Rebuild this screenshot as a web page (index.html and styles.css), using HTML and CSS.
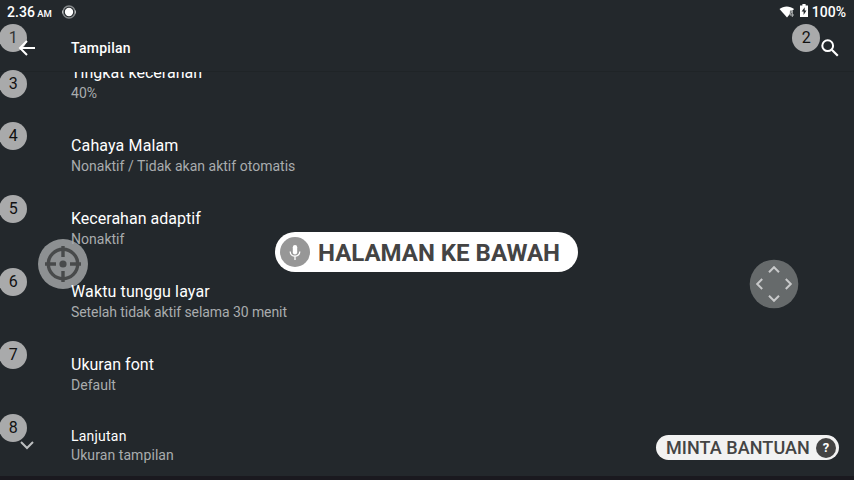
FILE: index.html
```html
<!DOCTYPE html>
<html lang="id">
<head>
<meta charset="utf-8">
<title>Tampilan</title>
<link rel="stylesheet" href="styles.css">
</head>
<body>
<div class="screen">
  <header class="status">
    <span class="time">2.36<small>AM</small></span>
    <svg class="recorder" width="16" height="16" viewBox="0 0 16 16"><circle cx="8" cy="8" r="6" fill="none" stroke="#85898b" stroke-width="1.5"/><path d="M1.5 6.5v3M14.5 6.5v3" stroke="#b5b8b9"/><circle cx="8" cy="8" r="4.2" fill="#fff"/></svg>
    <span class="spacer"></span>
    <svg class="wifi" width="16" height="14" viewBox="0 0 16 14"><path d="M.5 4C4.5.5 11 .5 15 4L8 12.5z" fill="#fff"/><path d="M11 5.5h4v6.5h-4.5z" fill="#23282c" opacity=".6"/><path d="M13.3 12V6L10.8 10H15" fill="none" stroke="#aeb1b2"/></svg>
    <svg class="battery" width="8" height="14" viewBox="0 0 8 14"><path d="M2.4 0h3.2v1.4H8V13H0V1.4h2.4z" fill="#fff"/><path d="M4.7 3.2L1.6 7.6h2v3.5L6.5 6.5h-1.8z" fill="#23282c"/></svg>
    <span class="percent">100%</span>
  </header>
  <nav class="toolbar">
    <svg class="back" width="18" height="16" viewBox="0 0 18 16"><path d="M17 8H3M9 1L2 8l7 7" fill="none" stroke="#fff" stroke-width="2"/></svg>
    <h1>Tampilan</h1>
    <svg class="search" width="18" height="18" viewBox="0 0 18 18"><circle cx="6.7" cy="6.7" r="5.4" fill="none" stroke="#fff" stroke-width="2"/><path d="M10.8 10.8l6 6" stroke="#fff" stroke-width="2.2"/></svg>
  </nav>
  <main class="list">
    <section class="row"><h2>Tingkat kecerahan</h2><p>40%</p></section>
    <section class="row"><h2 class="wide">Cahaya Malam</h2><p>Nonaktif / Tidak akan aktif otomatis</p></section>
    <section class="row"><h2>Kecerahan adaptif</h2><p>Nonaktif</p></section>
    <section class="row"><h2 class="wide">Waktu tunggu layar</h2><p class="tight">Setelah tidak aktif selama 30 menit</p></section>
    <section class="row"><h2>Ukuran font</h2><p>Default</p></section>
    <section class="row more"><svg class="chevron" width="14" height="9" viewBox="0 0 14 9"><path d="M1 1l6 6 6-6" fill="none" stroke="#bdbfc0" stroke-width="2"/></svg><h2>Lanjutan</h2><p>Ukuran tampilan</p></section>
  </main>
  <div class="bottom-edge"></div>

  <span class="tag t1">1</span>
  <span class="tag t2">2</span>
  <span class="tag t3">3</span>
  <span class="tag t4">4</span>
  <span class="tag t5">5</span>
  <span class="tag t6">6</span>
  <span class="tag t7">7</span>
  <span class="tag t8">8</span>

  <svg class="target" width="50" height="50" viewBox="0 0 50 50"><circle cx="25" cy="25" r="25" fill="#8d9092"/><g fill="none" stroke="#484a4b" stroke-width="3.4"><circle cx="25" cy="25" r="14.7"/><path d="M25 7v11M25 32v11M7 25h11M32 25h11"/></g><circle cx="25" cy="25" r="3.6" fill="#484a4b"/></svg>
  <svg class="dpad" width="50" height="50" viewBox="0 0 50 50"><circle cx="25" cy="25" r="24.3" fill="#666a6b"/><path d="M20 13.2l5-5 5 5M20 36.8l5 5 5-5M13.2 20l-5 5 5 5M36.8 20l5 5-5 5" fill="none" stroke="#c8c9ca" stroke-width="2"/></svg>

  <div class="voice">
    <svg width="30" height="30" viewBox="0 0 30 30"><circle cx="15" cy="15" r="15" fill="#979797"/><rect x="12.8" y="8" width="4.4" height="9.4" rx="2.2" fill="#fff"/><path d="M10.2 14.5c0 6.2 9.6 6.2 9.6 0M15 19.3V23" fill="none" stroke="#fff" stroke-width="1.3"/></svg>
    <span>HALAMAN KE BAWAH</span>
  </div>
  <div class="help"><span>MINTA BANTUAN</span><b>?</b></div>
</div>
</body>
</html>
```
FILE: styles.css
```css
* { box-sizing: border-box; }
body { margin: 0; background: #23282c; color: #fff; font-family: Roboto, "Liberation Sans", sans-serif; }
h1, h2, p { margin: 0; font-weight: 400; white-space: nowrap; }
svg { display: block; flex: none; }
.screen { position: relative; display: flex; flex-direction: column; width: 854px; height: 480px; overflow: hidden; }
.status { display: flex; align-items: center; height: 24px; padding: 0 8px 0 7px; font-size: 14px; font-weight: 500; }
.time { letter-spacing: .1px; }
.time small { margin-left: 2px; font-size: 9.5px; letter-spacing: 0; }
.recorder { margin-left: 9px; }
.spacer { flex: 1; }
.wifi { margin-right: 5px; }
.battery { margin: -2px 4px 0 0; }
.toolbar { position: relative; display: flex; align-items: center; height: 48px; padding: 0 15px 0 18px; border-bottom: 1px solid #1f2427; }
.toolbar h1 { flex: 1; margin-left: 35px; font-size: 14px; font-weight: 500; letter-spacing: .28px; }
.list { position: relative; flex: 1; min-height: 0; overflow: hidden; }
.row { height: 73px; padding: 16px 0 0 71px; }
.row:first-child { margin-top: -26px; }
.row h2 { font-size: 16px; line-height: 21px; letter-spacing: .02px; }
.row h2.wide { letter-spacing: .13px; }
.row p { color: #a9acae; font-size: 14px; line-height: 20px; letter-spacing: .02px; }
.row p.tight { letter-spacing: -.08px; }
.more { position: relative; }
.row.more h2 { font-size: 14px; line-height: 19px; letter-spacing: .22px; }
.row.more p { line-height: 19px; letter-spacing: .08px; }
.chevron { position: absolute; left: 20px; top: 30px; z-index: 2; }
.bottom-edge { height: 4px; background: #1a191f; }
.tag { position: absolute; left: -1px; width: 28px; height: 28px; border-radius: 50%; background: #a9aaab; color: #111; font-size: 16px; line-height: 28px; text-align: center; text-indent: .5px; }
.t1 { top: 24px; color: #333; }
.t2 { top: 24px; left: 792px; }
.t3 { top: 70px; }
.t4 { top: 122px; }
.t5 { top: 195px; }
.t6 { top: 268px; }
.t7 { top: 341px; }
.t8 { top: 414px; }
.back { position: relative; z-index: 2; }
.target { position: absolute; left: 38px; top: 239px; z-index: -1; }
.dpad { position: absolute; left: 749px; top: 259px; }
.voice { position: absolute; left: 275px; top: 232px; display: flex; align-items: center; gap: 8px; width: 303px; height: 40px; padding: 1px 0 0 5px; border-radius: 20px; background: #fff; color: #444; font-size: 24px; font-weight: 700; white-space: nowrap; }
.voice svg { margin-top: -1px; }
.help { position: absolute; left: 656px; top: 435px; display: flex; align-items: center; justify-content: space-between; width: 183px; height: 25px; padding: 0 3px 0 10px; border-radius: 13px; background: #f2f2f2; color: #444; font-size: 18px; font-weight: 500; letter-spacing: .07px; white-space: nowrap; }
.help b { width: 20px; height: 20px; border-radius: 50%; background: #444; color: #fff; font-size: 13px; line-height: 20px; text-align: center; }
```
